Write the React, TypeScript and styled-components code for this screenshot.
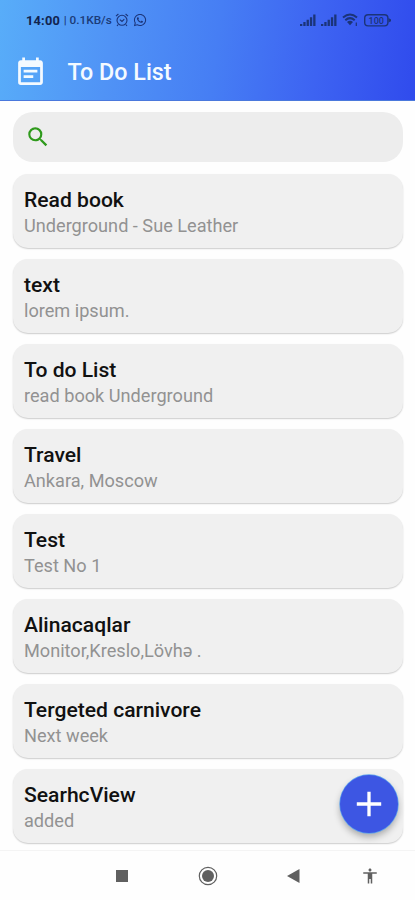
import React from "react";
import styled, { createGlobalStyle } from "styled-components";
import { MdEventNote, MdSearch, MdAccessibility } from "react-icons/md";
import { FaWhatsapp } from "react-icons/fa";

const GlobalStyle = createGlobalStyle`
  * { box-sizing: border-box; }
  body { margin: 0; background: #fefefe; font-family: Roboto, sans-serif; }
`;

const Screen = styled.div`
  position: relative;
  display: flex;
  flex-direction: column;
  width: 415px;
  height: 900px;
  overflow: hidden;
  background: #fefefe;
`;

const Header = styled.header`
  flex: none;
  height: 101px;
  background: linear-gradient(97deg, #58adf9 0%, #5093f6 27%, #467ef4 52%, #3d63f2 76%, #304bed 100%);
  border-bottom: 1px solid #4a78dc;
`;

const StatusBar = styled.div`
  display: flex;
  align-items: center;
  justify-content: space-between;
  height: 40px;
  padding: 0 24px 0 26px;
  color: #1b3478;
`;

const StatusGroup = styled.div<{ $gap: number }>`
  display: flex;
  align-items: center;
  gap: ${(p) => p.$gap}px;
`;

const Clock = styled.span`
  font-size: 12.8px;
  font-weight: 700;
  letter-spacing: 0.2px;
  color: #12244f;
`;

const Speed = styled.span`
  width: 48px;
  font-size: 11.8px;
  font-weight: 500;
  white-space: nowrap;
  color: #1b3b78;
`;

const TitleBar = styled.div`
  display: flex;
  align-items: center;
  height: 64px;
  padding-left: 14px;
  gap: 20.5px;
  color: #f4faff;
`;

const AppTitle = styled.h1`
  margin: 0;
  font-size: 23.3px;
  font-weight: 500;
  line-height: 28px;
`;

const Content = styled.main`
  flex: 1;
  display: flex;
  flex-direction: column;
  gap: 11px;
  padding: 11px 12px 0 13px;
  min-height: 0;
`;

const SearchBox = styled.div`
  display: flex;
  align-items: center;
  flex: none;
  height: 50px;
  margin-bottom: 0.6px;
  padding-left: 12px;
  border-radius: 20px;
  background: #ededed;
  color: #2f9a1c;
`;

const Card = styled.article`
  flex: none;
  height: 74px;
  padding: 13.4px 11px 0;
  border-radius: 15px;
  background: #f0f0f0;
  box-shadow: 0 1px 1.5px rgba(0, 0, 0, 0.2);
`;

const CardTitle = styled.h2`
  margin: 0;
  font-size: 21.1px;
  font-weight: 500;
  line-height: 26px;
  color: #111;
`;

const CardText = styled.p`
  margin: 0;
  font-size: 18.15px;
  line-height: 26px;
  color: #929292;
`;

const NavBar = styled.nav`
  display: grid;
  grid-template-columns: 86px 86px 85px 67px;
  align-items: center;
  justify-items: center;
  flex: none;
  height: 50px;
  padding-left: 79px;
  border-top: 1px solid #f4f4f4;
  background: #fefefe;
  color: #606060;
`;

const AddButton = styled.button`
  position: absolute;
  right: 17px;
  bottom: 67px;
  display: grid;
  place-items: center;
  width: 58px;
  height: 58px;
  padding: 0;
  border: 0;
  border-radius: 50%;
  background: #3d56e3;
  box-shadow: 0 0 0 0.7px #5ca4ef, 0 4px 7px rgba(0, 0, 0, 0.3);
`;

const tasks = [
  { title: "Read book", text: "Underground - Sue Leather" },
  { title: "text", text: "lorem ipsum." },
  { title: "To do List", text: "read book Underground" },
  { title: "Travel", text: "Ankara, Moscow" },
  { title: "Test", text: "Test No 1" },
  { title: "Alinacaqlar", text: "Monitor,Kreslo,Lövhə ." },
  { title: "Tergeted carnivore", text: "Next week" },
  { title: "SearhcView", text: "added" },
];

const AlarmIcon = () => (
  <svg width="14" height="14" viewBox="0 0 14 14" fill="none" stroke="currentColor" strokeWidth="1.1">
    <circle cx="7" cy="7.3" r="5" />
    <path d="M1 3.2 3.4 1M13 3.2 10.6 1M3.2 11.5 2 13M10.8 11.5 12 13M4.8 6.6 7 8.5 9.3 6.2" />
  </svg>
);

const SignalIcon = () => (
  <svg width="16" height="12" viewBox="0 0 16 12" fill="currentColor">
    <path d="M0 10h2.3v2H0zM3.3 8h2.3v4H3.3zM6.6 5.7h2.3V12H6.6zM9.9 3.2h2.3V12H9.9zM13.2.5h2.3V12h-2.3z" />
  </svg>
);

const WifiIcon = () => (
  <svg width="17" height="14" viewBox="0 0 17 14" fill="none" stroke="currentColor" strokeWidth="2">
    <path d="M1 4.5Q8 -1.5 15 4.5M3.3 7.2Q8 3 12.7 7.2" />
    <path d="M5 9Q8 6.5 11 9L8 12.3z" fill="currentColor" stroke="none" />
    <path d="M14.3 9.5v3.5" strokeWidth="1.2" />
  </svg>
);

const BatteryIcon = () => (
  <svg width="27" height="13" viewBox="0 0 27 13">
    <rect x=".7" y=".7" width="23.2" height="11.2" rx="3.4" fill="none" stroke="currentColor" strokeWidth="1.4" />
    <path d="M24.5 4 27 5.4v1.8l-2.5 1.4z" fill="currentColor" />
    <text x="12.3" y="9.6" textAnchor="middle" fontFamily="Roboto, sans-serif" fontSize="9" fontWeight="500" fill="currentColor">100</text>
  </svg>
);

export default function App() {
  return (
    <Screen>
      <GlobalStyle />
      <Header>
        <StatusBar>
          <StatusGroup $gap={3.7}>
            <Clock>14:00</Clock>
            <Speed>| 0.1KB/s</Speed>
            <AlarmIcon />
            <FaWhatsapp size={14} />
          </StatusGroup>
          <StatusGroup $gap={5}>
            <SignalIcon />
            <SignalIcon />
            <WifiIcon />
            <BatteryIcon />
          </StatusGroup>
        </StatusBar>
        <TitleBar>
          <MdEventNote size={33} />
          <AppTitle>To Do List</AppTitle>
        </TitleBar>
      </Header>
      <Content>
        <SearchBox>
          <MdSearch size={26} />
        </SearchBox>
        {tasks.map((task) => (
          <Card key={task.title}>
            <CardTitle>{task.title}</CardTitle>
            <CardText>{task.text}</CardText>
          </Card>
        ))}
      </Content>
      <NavBar>
        <svg width="12" height="12" viewBox="0 0 12 12">
          <rect width="12" height="12" fill="currentColor" />
        </svg>
        <svg width="20" height="20" viewBox="0 0 20 20">
          <circle cx="10" cy="10" r="8.7" fill="none" stroke="currentColor" strokeWidth="1.2" />
          <circle cx="10" cy="10" r="6" fill="currentColor" />
        </svg>
        <svg width="13" height="14" viewBox="0 0 13 14">
          <path d="M0 7 12.5 0v14z" fill="currentColor" />
        </svg>
        <MdAccessibility size={18} />
      </NavBar>
      <AddButton aria-label="Add task">
        <svg width="26" height="26" viewBox="0 0 26 26" fill="none" stroke="#fff" strokeWidth="3.3">
          <path d="M13 .8v24.4M.8 13h24.4" />
        </svg>
      </AddButton>
    </Screen>
  );
}
